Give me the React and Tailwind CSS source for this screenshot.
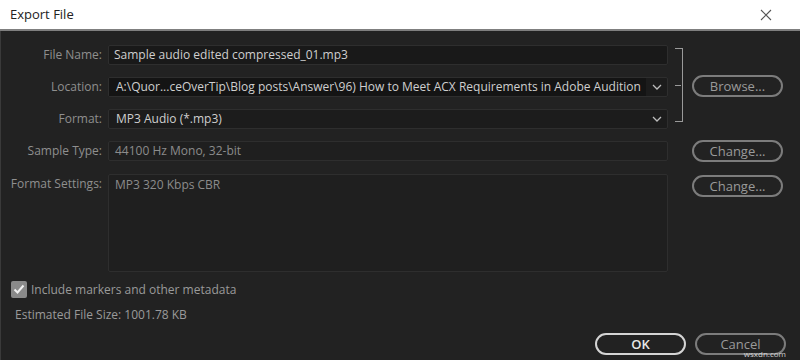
import React from "react";

const font = { fontFamily: '"Open Sans", "Noto Sans", sans-serif' };

function Chevron() {
  return (
    <svg width="10" height="6" viewBox="0 0 10 6" className="shrink-0">
      <path d="M1 1 L5 5 L9 1" fill="none" stroke="#bdbdbd" strokeWidth="1.3" />
    </svg>
  );
}

function Label({ children }) {
  return (
    <div className="w-[101px] shrink-0 text-right text-[12px] leading-[20px] text-[#8f8f8f] whitespace-nowrap">
      {children}
    </div>
  );
}

function Pill({ children, primary }) {
  return (
    <button
      className={
        primary
          ? "w-[91px] h-[22px] shrink-0 rounded-full border-2 border-[#d4d4d4] text-[13px] font-semibold text-[#e8e8e8] leading-[18px]"
          : "w-[91px] h-[22px] shrink-0 rounded-full border-2 border-[#7c7c7c] text-[13px] text-[#9a9a9a] leading-[18px]"
      }
    >
      {children}
    </button>
  );
}

export default function App() {
  return (
    <div className="w-[800px] h-[360px] bg-[#222222] flex flex-col overflow-hidden" style={font}>
      <div className="h-[31px] shrink-0 bg-white border-b-2 border-[#7f7f7f] flex items-center justify-between pl-[10px] pr-[28px]">
        <span className="text-[13px] text-[#222] leading-none">Export File</span>
        <svg width="12" height="12" viewBox="0 0 12 12">
          <path d="M1 1 L11 11 M11 1 L1 11" stroke="#555" strokeWidth="1.1" />
        </svg>
      </div>
      <div className="flex-1 flex flex-col border-l border-[#3a3a3a]">
        {/* top group */}
        <div className="flex items-start pt-[14px]">
          <div className="flex flex-col gap-[12px]">
            <div className="flex items-center h-[20px]">
              <Label>File Name:</Label>
              <div className="ml-[6px] w-[560px] h-[20px] bg-[#191919] border border-[#2e2e2e] rounded-[2px] flex items-center px-[5px] text-[12px] text-[#cfcfcf] whitespace-nowrap">
                Sample audio edited compressed_01.mp3
              </div>
            </div>
            <div className="flex items-center h-[20px]">
              <Label>Location:</Label>
              <div className="ml-[6px] w-[560px] h-[20px] bg-[#1c1c1c] border border-[#2e2e2e] rounded-[2px] flex items-center pr-[5px] text-[12px] text-[#cfcfcf]">
                <div className="flex-1 h-full bg-[#141414] pl-[7px] flex items-center whitespace-nowrap overflow-hidden">
                  A:\Quor...ceOverTip\Blog posts\Answer\96) How to Meet ACX Requirements in Adobe Audition
                </div>
                <div className="w-[16px] flex justify-end"><Chevron /></div>
              </div>
            </div>
            <div className="flex items-center h-[20px]">
              <Label>Format:</Label>
              <div className="ml-[6px] w-[560px] h-[20px] bg-[#1c1c1c] border border-[#2e2e2e] rounded-[2px] flex items-center justify-between pl-[7px] pr-[5px] text-[12px] text-[#cfcfcf]">
                <span>MP3 Audio (*.mp3)</span>
                <Chevron />
              </div>
            </div>
          </div>
          <div className="flex items-center mt-[3px]">
            <div className="ml-[7px] w-[8px] h-[74px] border-y border-r border-[#9a9a9a] flex items-center">
              <div className="w-[6px] h-px bg-[#9a9a9a]" />
            </div>
            <div className="ml-[9px]">
              <Pill>Browse...</Pill>
            </div>
          </div>
        </div>
        {/* sample type */}
        <div className="flex items-center h-[20px] mt-[12px]">
          <Label>Sample Type:</Label>
          <div className="ml-[6px] w-[560px] h-[20px] bg-[#1f1f1f] border border-[#2e2e2e] rounded-[2px] flex items-center px-[6px] text-[12px] text-[#8c8c8c]">
            44100 Hz Mono, 32-bit
          </div>
          <div className="ml-[24px] h-[20px] flex items-center">
            <Pill>Change...</Pill>
          </div>
        </div>
        {/* format settings */}
        <div className="flex items-start h-[98px] mt-[13px]">
          <Label>Format Settings:</Label>
          <div className="ml-[6px] w-[560px] h-[98px] bg-[#1f1f1f] border border-[#2e2e2e] rounded-[2px] px-[6px] py-[1px] text-[12px] leading-[18px] text-[#8c8c8c]">
            MP3 320 Kbps CBR
          </div>
          <div className="ml-[24px] -mt-[1px]">
            <Pill>Change...</Pill>
          </div>
        </div>
        {/* checkbox */}
        <div className="flex items-center h-[17px] mt-[9px] ml-[10px]">
          <div className="w-[16px] h-[17px] rounded-[2px] bg-[#8a8a8a] flex items-center justify-center">
            <svg width="12" height="11" viewBox="0 0 12 11">
              <path d="M1.5 5.5 L4.5 8.5 L10.5 1.5" fill="none" stroke="#f0f0f0" strokeWidth="2" />
            </svg>
          </div>
          <span className="ml-[4px] text-[12px] leading-[17px] text-[#9a9a9a]">Include markers and other metadata</span>
        </div>
        <div className="mt-[9px] ml-[14px] h-[16px] text-[12px] leading-[16px] text-[#9a9a9a]">Estimated File Size: 1001.78 KB</div>
        {/* bottom buttons */}
        <div className="flex justify-end gap-[9px] pr-[14px] mt-[10px] relative">
          <Pill primary>OK</Pill>
          <Pill>Cancel</Pill>
          <span className="absolute right-[14px] top-[17px] text-[8px] leading-none text-[#d0d0d0]">wsxdn.com</span>
        </div>
      </div>
    </div>
  );
}
